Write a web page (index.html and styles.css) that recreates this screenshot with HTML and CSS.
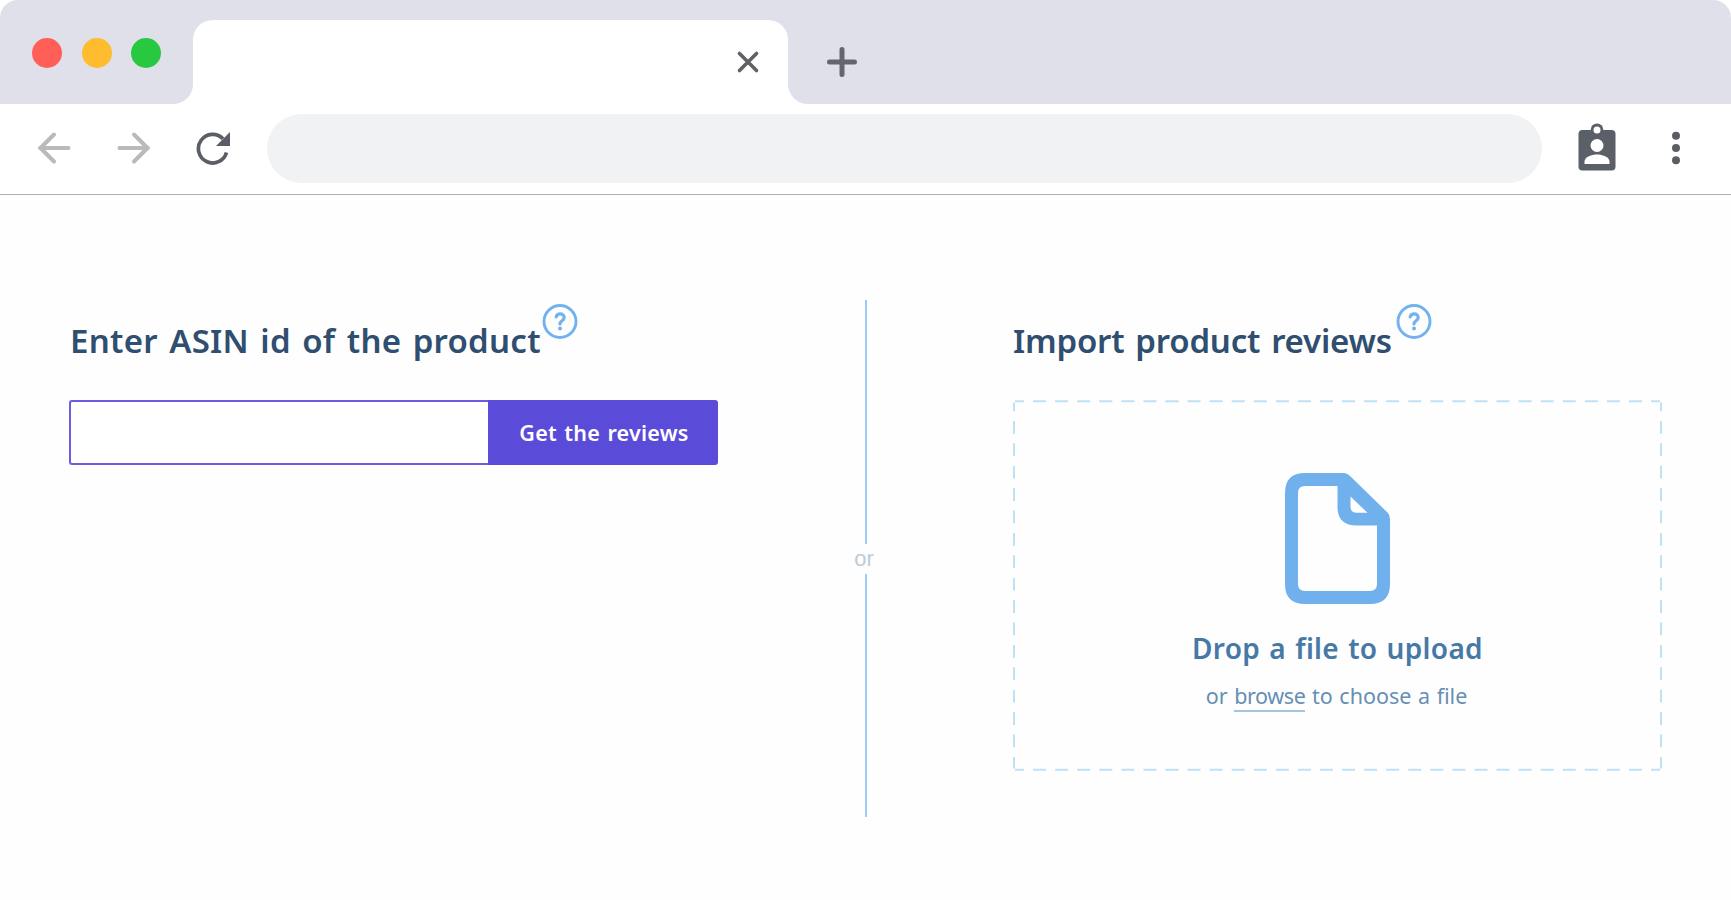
FILE: index.html
```html
<!DOCTYPE html>
<html lang="en">
<head>
<meta charset="utf-8">
<title>Product reviews</title>
<link rel="stylesheet" href="styles.css">
</head>
<body>
<div class="browser">
  <header class="tabs">
    <div class="lights"><i class="light red"></i><i class="light yellow"></i><i class="light green"></i></div>
    <div class="tab">
      <svg class="close" width="24" height="24" viewBox="0 0 24 24"><path d="M3.500 3.500l17 17M20.500 3.500l-17 17"/></svg>
    </div>
    <svg class="plus" width="32" height="32" viewBox="0 0 32 32"><path d="M16 3.500v25M3.500 16h25"/></svg>
  </header>
  <nav class="toolbar">
    <svg class="arrow" width="36" height="36" viewBox="0 0 36 36"><path d="M32.500 18H4M18 4.500L4.500 18 18 31.500"/></svg>
    <svg class="arrow forward" width="36" height="36" viewBox="0 0 36 36"><path d="M3.500 18H32M18 4.500L31.500 18 18 31.500"/></svg>
    <svg class="reload" width="36" height="36" viewBox="0 0 36 36"><path class="ring" d="M31.500 22.500A14.300 14.300 0 1 1 28 8.700"/><path class="head" d="M35 2v14H21z"/></svg>
    <div class="address"></div>
    <svg class="badge" width="38" height="48" viewBox="0 0 38 48"><rect x=".5" y="7" width="37" height="40.500" rx="4"/><circle cx="19" cy="6.700" r="6.300"/><circle class="hole" cx="19" cy="7" r="3.500"/><circle class="hole" cx="19" cy="22.500" r="6.500"/><path class="hole" d="M6.500 41v-2.500c0-4.500 7.500-7 12.500-7s12.500 2.500 12.500 7V41z"/></svg>
    <svg class="dots" width="10" height="34" viewBox="0 0 10 34"><circle cx="5" cy="4.700" r="4"/><circle cx="5" cy="17" r="4"/><circle cx="5" cy="29.300" r="4"/></svg>
  </nav>
  <main class="content">
    <section class="panel">
      <div class="heading">
        <h2 class="title asin">Enter ASIN id of the product</h2>
        <svg class="help" width="36" height="36" viewBox="0 0 36 36"><circle cx="18" cy="17.500" r="16"/><path class="mark" d="M14.200 12.900c.5-1.900 2-3 4-3 2.300 0 4 1.400 4 3.600 0 3.400-4.200 3.200-4.200 6.500"/><circle class="point" cx="18" cy="24.600" r="2"/></svg>
      </div>
      <form class="lookup">
        <input class="field" type="text" aria-label="ASIN">
        <button class="submit" type="button"><span>Get the reviews</span></button>
      </form>
    </section>
    <div class="divider"><i class="rule"></i><span class="or">or</span><i class="rule"></i></div>
    <section class="panel">
      <div class="heading">
        <h2 class="title import">Import product reviews</h2>
        <svg class="help" width="36" height="36" viewBox="0 0 36 36"><circle cx="18" cy="17.500" r="16"/><path class="mark" d="M14.200 12.900c.5-1.900 2-3 4-3 2.300 0 4 1.400 4 3.600 0 3.400-4.200 3.200-4.200 6.500"/><circle class="point" cx="18" cy="24.600" r="2"/></svg>
      </div>
      <div class="drop">
        <svg class="outline" width="649" height="371" viewBox="0 0 649 371"><path d="M2 1.200H647M2 369.800H647"/><path class="side" d="M1 2.500V368.500M648 2.500V368.500"/></svg>
        <svg class="file" width="105" height="131" viewBox="0 0 105 131"><path fill-rule="evenodd" d="M20 0H59Q62 0 64.500 2.500L102.500 39.500Q105 42 105 46V111Q105 131 85 131H20Q0 131 0 111V20Q0 0 20 0ZM20 13Q13 13 13 20V111Q13 118 20 118H85Q92 118 92 111V52.500H72Q52.500 52.500 52.500 34V13ZM65.500 23.500V34Q65.500 39.800 72 39.800H82.500Z"/></svg>
        <p class="lead"><span>Drop a file to upload</span></p>
        <p class="hint"><span>or <a class="browse">browse</a> to choose a file</span></p>
      </div>
    </section>
  </main>
</div>
</body>
</html>
```
FILE: styles.css
```css
* { box-sizing: border-box; }
body { margin: 0; background: #fff; font-family: "Noto Sans", sans-serif; }
svg { display: block; flex: none; fill: none; }
.browser { width: 1731px; height: 900px; overflow: hidden; background: #fefefe; border-radius: 18px 18px 0 0; }

.tabs { height: 104px; display: flex; background: #dfe0e9; }
.lights { width: 193px; padding: 38px 0 0 32px; display: flex; gap: 19.500px; }
.light { width: 30px; height: 30px; border-radius: 50%; }
.red { background: #ff5f57; }
.yellow { background: #febc2e; }
.green { background: #28c940; }
.tab { position: relative; width: 595px; height: 84px; margin-top: 20px; padding: 30px 28px 0 0; display: flex; justify-content: flex-end; background: #fff; border-radius: 20px 20px 0 0; }
.tab::before, .tab::after { content: ""; position: absolute; bottom: 0; width: 20px; height: 20px; }
.tab::before { left: -20px; background: radial-gradient(circle at 0 0, transparent 19.500px, #fff 20.500px); }
.tab::after { right: -20px; background: radial-gradient(circle at 100% 0, transparent 19.500px, #fff 20.500px); }
.close { stroke: #5f6165; stroke-width: 3.600; stroke-linecap: round; }
.plus { margin: 46px 0 0 38px; stroke: #65656f; stroke-width: 5; stroke-linecap: round; }

.toolbar { height: 91px; display: flex; align-items: center; padding: 0 50px 3px 36px; background: #fff; border-bottom: 1px solid #b0b0b2; }
.arrow { stroke: #b8babb; stroke-width: 4; stroke-linecap: round; stroke-linejoin: round; }
.forward { margin-left: 44px; }
.reload { margin-left: 43px; }
.ring { stroke: #5b5f65; stroke-width: 3.700; }
.head { fill: #5b5f65; }
.address { width: 1276px; height: 69px; margin: 2px 0 0 36px; border-radius: 35px; background: #f1f2f4; }
.badge { margin: -1px 0 0 36px; fill: #5b5f67; }
.hole { fill: #fff; }
.dots { margin-left: 55px; fill: #5b5f65; }

.content { display: grid; grid-template-columns: 649px 1fr 649px; padding: 105px 69px 0; }
.panel { padding-top: 4px; }
.heading { height: 96px; display: flex; align-items: flex-start; }
.title { margin: 17px 0 0; font-size: 33px; line-height: 40px; font-weight: 600; color: #2f4e70; white-space: nowrap; flex: none; word-spacing: 2.500px; }
.asin { width: 473px; letter-spacing: .27px; padding-left: 1px; }
.import { width: 383px; letter-spacing: -.2px; }
.help { stroke: #71b2ef; stroke-width: 2.900; stroke-linecap: round; }
.mark { stroke-width: 3.200; }
.point { fill: #71b2ef; stroke: none; }
.lookup { display: flex; height: 65px; }
.field { width: 419px; height: 65px; padding: 0 16px; border: 2px solid #6d5de3; border-right: 0; border-radius: 3px 0 0 3px; background: #fff; outline: 0; }
.submit { width: 230px; height: 65px; padding: 0 0 0 2px; border: 0; border-radius: 0 3px 3px 0; background: #5b4bd9; color: #fff; font: 600 21.500px/30px "Noto Sans", sans-serif; letter-spacing: .25px; word-spacing: 1.500px; }
.divider { display: flex; flex-direction: column; align-items: center; }
.rule { width: 2px; height: 243.500px; background: #a0caf3; }
.or { height: 30px; margin-right: 3px; font: 22px/30px "Liberation Sans", sans-serif; color: #bccdd8; }
.drop { position: relative; height: 371px; padding-top: 73px; display: flex; flex-direction: column; align-items: center; }
.outline { position: absolute; inset: 0; stroke: #bfe1f6; stroke-width: 2; stroke-dasharray: 13 9.070; stroke-dashoffset: 4; }
.side { stroke-dasharray: 12.800 9.600; }
.file { fill: #70b0ec; margin-left: -1px; }
.lead { margin: 24px 0 0; font-size: 28px; line-height: 40px; font-weight: 600; color: #4679a6; white-space: nowrap; letter-spacing: .3px; word-spacing: 1.600px; }
.hint { margin: 13px 2px 0 0; font-size: 21.500px; line-height: 30px; color: #668fb5; white-space: nowrap; word-spacing: 1px; }
.browse { padding-bottom: 0; border-bottom: 2px solid #a5c5df; letter-spacing: -.4px; }
```
